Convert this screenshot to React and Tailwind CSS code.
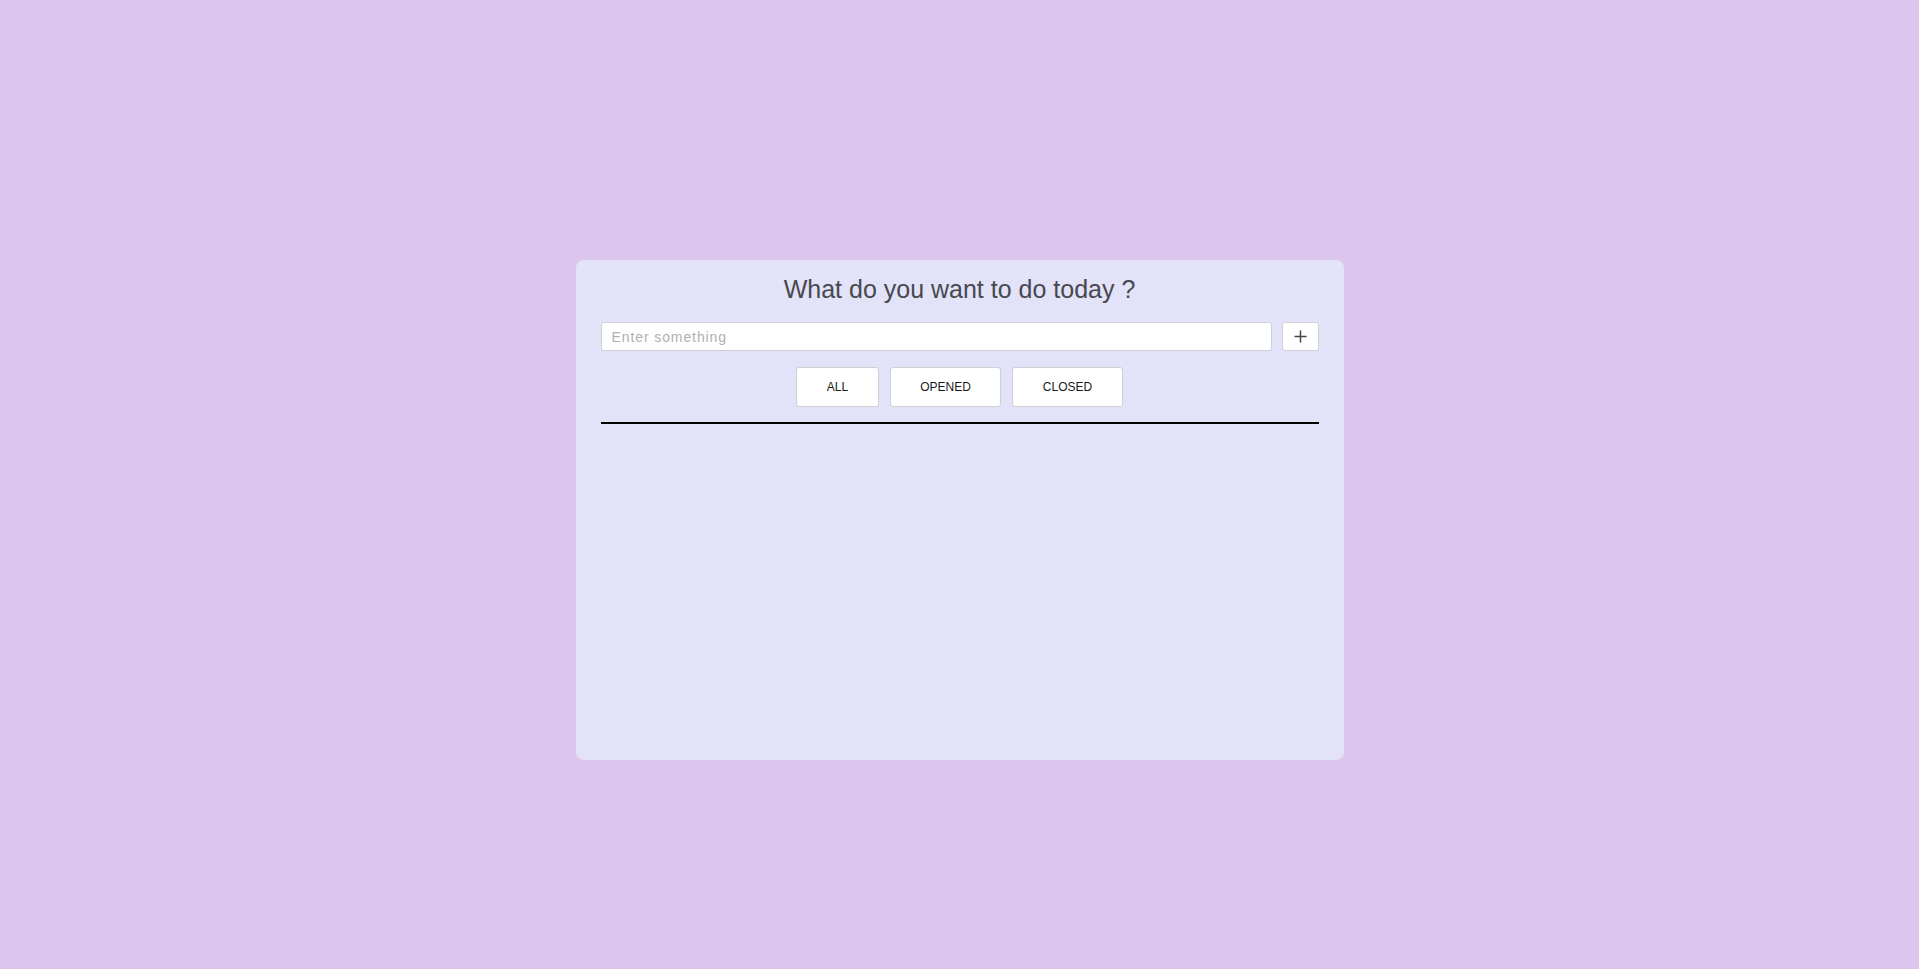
import { useState } from "react";

const filters = [
  { key: "all", label: "ALL", w: "w-[83px]" },
  { key: "opened", label: "OPENED", w: "w-[111px]" },
  { key: "closed", label: "CLOSED", w: "w-[111px]" },
];

const App = () => {
  const [text, setText] = useState("");
  const [filter, setFilter] = useState("all");

  return (
    <div className="min-h-screen w-full bg-[#dcc6ed] font-['Liberation_Sans',Arial,sans-serif]">
      <div className="mx-auto pt-[260px] w-[768px]">
        <div className="h-[500px] rounded-lg bg-[#e2e2f8] px-[25px] pt-[15px]">
          {/* Title */}
          <h1 className="text-center text-[25px] leading-[28px] text-[#48484f]">
            What do you want to do today ?
          </h1>

          {/* Input row */}
          <div className="mt-[19px] flex gap-[10px]">
            <input
              value={text}
              onChange={(e) => setText(e.target.value)}
              placeholder="Enter something"
              className="h-[29px] flex-1 rounded-[3px] border border-[#cfcfd6] bg-white px-[10px] text-[14px] tracking-[0.9px] text-[#333] placeholder:text-[#b0b0b0] outline-none"
            />
            <button className="flex h-[29px] w-[37px] items-center justify-center rounded-[3px] border border-[#cfcfd6] bg-white">
              <svg width="13" height="13" viewBox="0 0 13 13">
                <path d="M6.5 0.5V12.5M0.5 6.5H12.5" stroke="#444" strokeWidth="1.5" />
              </svg>
            </button>
          </div>

          {/* Filters */}
          <div className="mt-[16px] flex justify-center gap-[11px]">
            {filters.map((f) => (
              <button
                key={f.key}
                onClick={() => setFilter(f.key)}
                className={`${f.w} h-[40px] rounded-[3px] border border-[#cfcfd6] bg-white text-[12px] text-[#1a1a1a]`}
              >
                {f.label}
              </button>
            ))}
          </div>

          {/* Divider */}
          <div className="mt-[15px] h-[2px] bg-black" />
        </div>
      </div>
    </div>
  );
};

export default App;
